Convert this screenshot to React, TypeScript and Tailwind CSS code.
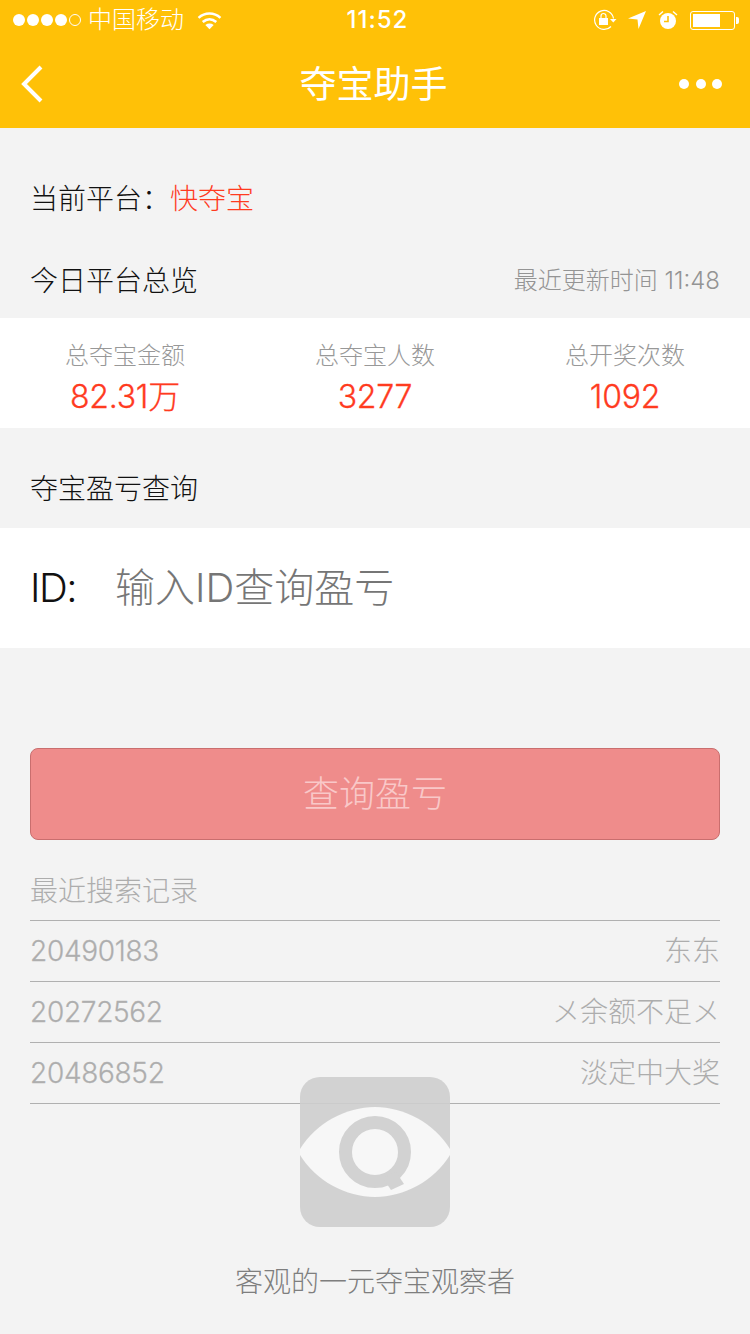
import React from "react";

const font = { fontFamily: 'Inter,"Noto Sans CJK SC",sans-serif' };

function Stat({ label, value }: { label: string; value: string }) {
  return (
    <div className="flex-1 flex flex-col items-center">
      <div className="text-[24px] leading-[30px] text-[#989898] font-light mt-[23px]">{label}</div>
      <div className="text-[32px] leading-[40px] text-[#ff3b1f] font-light tracking-[-0.2px] mt-[6px] [-webkit-text-stroke:0.3px_#ff3b1f]">{value}</div>
    </div>
  );
}

function Record({ id, name }: { id: string; name: string }) {
  return (
    <div className="h-[61px] border-b border-[#b0b0b0] flex items-center justify-between text-[28px] text-[#adadad] font-light">
      <span className="tracking-[-0.3px] [-webkit-text-stroke:0.3px_#b4b4b4]">{id}</span>
      <span>{name}</span>
    </div>
  );
}

function StatusBar() {
  return (
    <div className="h-[40px] flex items-center text-white relative">
      <div className="flex items-center gap-[2px] ml-[13px]">
        {[0, 1, 2, 3].map((i) => (
          <span key={i} className="w-[12px] h-[12px] rounded-full bg-white" />
        ))}
        <span className="w-[12px] h-[12px] rounded-full border border-white" />
      </div>
      <span className="ml-[7px] text-[24px] font-light leading-none">中国移动</span>
      <svg className="ml-[13px]" width="25" height="19" viewBox="0 0 24 18" fill="none" stroke="#fff" strokeWidth="2.4">
        <path d="M1.5 6.5C7.5 1 16.5 1 22.5 6.5" />
        <path d="M5.5 10.5C9.5 7 14.5 7 18.5 10.5" />
        <path d="M12 17.5L8 13.2C10.5 11.3 13.5 11.3 16 13.2Z" fill="#fff" stroke="none" />
      </svg>
      <span className="absolute left-[5px] right-0 text-center text-[24px] font-medium tracking-[1px] leading-none">11:52</span>
      <div className="ml-auto mr-[11px] flex items-center">
        <svg width="24" height="22" viewBox="0 0 24 22" fill="none" stroke="#fff" strokeWidth="1.2">
          <path d="M20.5 9.5A9.5 9.5 0 1 0 18 17.5" />
          <path d="M17 10h6.5l-3.2 3.4Z" fill="#fff" stroke="none" />
          <rect x="6" y="9" width="9" height="7" fill="#fff" stroke="none" />
          <path d="M8 9V7a2.5 2.5 0 0 1 5 0v2" />
        </svg>
        <svg className="ml-[11px]" width="18" height="18" viewBox="0 0 18 18" fill="#fff">
          <path d="M18 0L10.5 18 9.5 8.5 0 7.5Z" />
        </svg>
        <svg className="ml-[12px]" width="20" height="20" viewBox="0 0 20 20" fill="none">
          <circle cx="10" cy="11" r="8" fill="#fff" />
          <path d="M10 6v5.5H6" stroke="#ffc107" strokeWidth="1.6" />
          <path d="M1 5L5 1.5M19 5L15 1.5" stroke="#fff" strokeWidth="1.4" />
        </svg>
        <div className="ml-[12px] w-[45px] h-[19px] border border-white rounded-[3px] p-[2px]">
          <div className="w-[27px] h-full bg-white" />
        </div>
        <div className="w-[3px] h-[7px] bg-white rounded-r-[2px] ml-[1px]" />
      </div>
    </div>
  );
}

export default function App() {
  return (
    <div className="w-[750px] h-[1334px] bg-[#f3f3f3] relative overflow-hidden" style={font}>
      <div className="h-[128px] bg-[#ffc107] text-white">
        <StatusBar />
        <div className="h-[88px] flex items-center justify-between relative">
          <svg className="ml-[20px]" width="24" height="38" viewBox="0 0 24 38" fill="none" stroke="#fff" strokeWidth="4">
            <path d="M21 2L4 19l17 17" />
          </svg>
          <span className="absolute left-0 right-[3px] top-[26px] text-center text-[37px] leading-none">夺宝助手</span>
          <div className="flex gap-[6.5px] mr-[28px]">
            <span className="w-[10px] h-[10px] rounded-full bg-white" />
            <span className="w-[10px] h-[10px] rounded-full bg-white" />
            <span className="w-[10px] h-[10px] rounded-full bg-white" />
          </div>
        </div>
      </div>

      <div className="h-[62px] mt-[40px] px-[30px] text-[28px] text-[#111] font-light leading-[62px]">
        当前平台：<span className="text-[#ff3b1f]">快夺宝</span>
      </div>
      <div className="h-[66px] mt-[16px] px-[30px] flex justify-between items-start font-light">
        <span className="text-[28px] text-[#111] leading-[70px]">今日平台总览</span>
        <span className="text-[24px] text-[#949494] leading-[70px]">最近更新时间 11:48</span>
      </div>

      <div className="h-[110px] mt-[6px] bg-white flex">
        <Stat label="总夺宝金额" value="82.31万" />
        <Stat label="总夺宝人数" value="3277" />
        <Stat label="总开奖次数" value="1092" />
      </div>

      <div className="h-[100px] px-[30px] pt-[22px] flex items-center text-[28px] text-[#111] font-light">夺宝盈亏查询</div>

      <div className="h-[120px] bg-white px-[30px] flex items-center text-[40px] font-light">
        <span className="text-[#111] w-[85px] tracking-[-1.5px]">ID:</span>
        <span className="text-[#767676]">输入ID查询盈亏</span>
      </div>

      <div className="mt-[100px] mx-[30px] h-[92px] rounded-[8px] bg-[#ef8c8b] border border-[#c96e6e] flex items-center justify-center text-[36px] text-[#f9c8c8] font-light">
        查询盈亏
      </div>

      <div className="mx-[30px]">
        <div className="h-[81px] pt-[21px] flex items-center border-b border-[#b0b0b0] text-[28px] text-[#adadad] font-light">
          最近搜索记录
        </div>
        <Record id="20490183" name="东东" />
        <Record id="20272562" name="メ余额不足メ" />
        <Record id="20486852" name="淡定中大奖" />
      </div>

      {/* Watermark logo sits over the record list */}
      <div className="absolute left-[300px] top-[1077px] flex flex-col items-center w-[150px]">
        <svg width="150" height="150" viewBox="0 0 150 150" className="opacity-90">
          <rect width="150" height="150" rx="20" fill="#cfcfcf" />
          <path d="M0 72C16 46 46 30 75 30S134 46 150 72Q151 75 150 78C134 104 104 120 75 120S16 104 0 78Q-1 75 0 72Z" fill="#f8f8f8" />
          <circle cx="75" cy="75" r="29.5" fill="none" stroke="#cfcfcf" strokeWidth="13" />
          <path d="M83 101L96 95L104 107L91 113Z" fill="#cfcfcf" />
        </svg>
      </div>
      <div className="absolute left-0 right-0 top-[1264px] text-center text-[28px] leading-[36px] text-[#7e7e7e] font-light">
        客观的一元夺宝观察者
      </div>
    </div>
  );
}
